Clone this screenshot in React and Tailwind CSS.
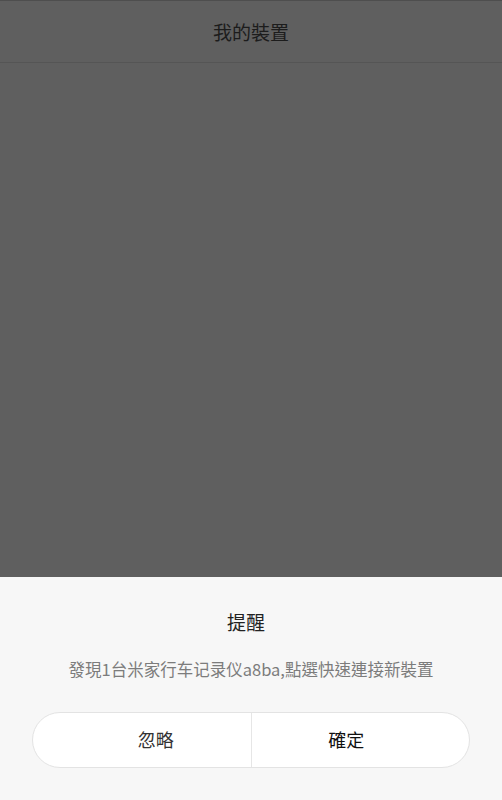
export default function App() {
  const font = { fontFamily: '"Noto Sans CJK TC", "Noto Sans CJK SC", Roboto, sans-serif' };
  return (
    <div className="w-[502px] h-[800px] flex flex-col bg-[#5f5f5f] overflow-hidden" style={font}>
      <div className="h-[63px] shrink-0 border-t border-[#4e4e4e] border-b border-b-[#555555] flex items-center justify-center">
        <span className="text-[19px] text-[#1c1c1c] leading-none">我的裝置</span>
      </div>
      <div className="flex-1" />
      <div className="h-[223px] shrink-0 bg-[#f7f7f7] flex flex-col items-center">
        <div className="mt-[35px] mr-[10px] text-[19px] leading-none text-[#222222]">提醒</div>
        <div className="mt-[30px] text-[16.5px] leading-none text-[#7c7c7c]">發現1台米家行车记录仪a8ba,點選快速連接新裝置</div>
        <div className="mt-[34px] w-[438px] h-[56px] flex rounded-full bg-white border border-[#e3e3e3] overflow-hidden">
          <div className="flex-1 flex items-center justify-center pl-[28px] text-[18px] text-[#333333] border-r border-[#e6e6e6]">忽略</div>
          <div className="flex-1 flex items-center justify-center pr-[28px] text-[18px] text-[#111111]">確定</div>
        </div>
      </div>
    </div>
  );
}
